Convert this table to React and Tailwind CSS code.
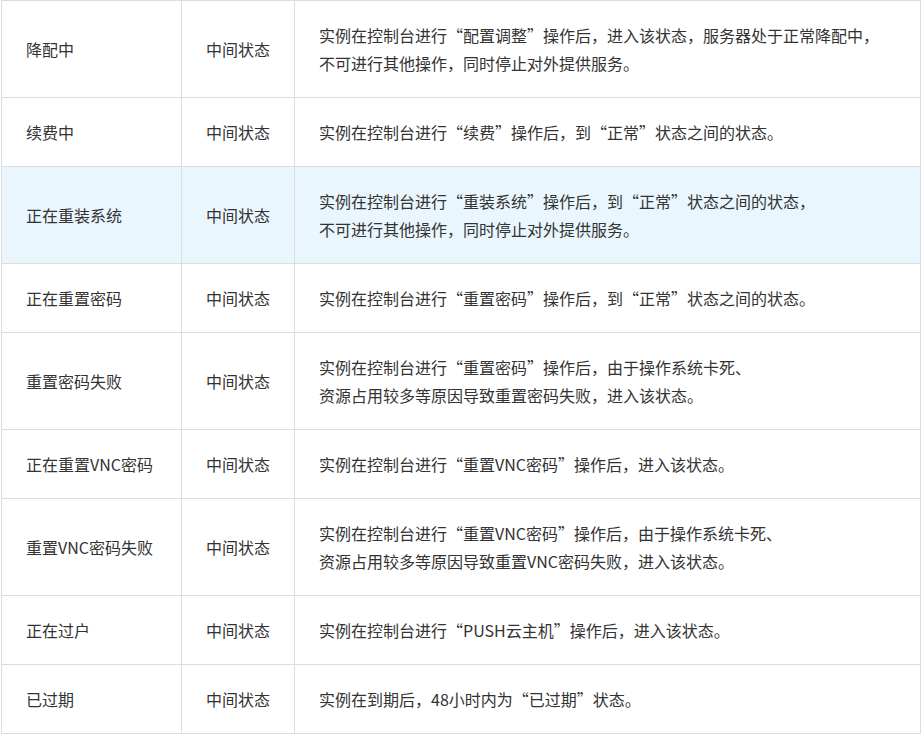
import React from "react";

const rows = [
  {
    name: "降配中",
    type: "中间状态",
    desc: ["实例在控制台进行“配置调整”操作后，进入该状态，服务器处于正常降配中，", "不可进行其他操作，同时停止对外提供服务。"],
  },
  { name: "续费中", type: "中间状态", desc: ["实例在控制台进行“续费”操作后，到“正常”状态之间的状态。"] },
  {
    name: "正在重装系统",
    type: "中间状态",
    desc: ["实例在控制台进行“重装系统”操作后，到“正常”状态之间的状态，", "不可进行其他操作，同时停止对外提供服务。"],
    active: true,
  },
  { name: "正在重置密码", type: "中间状态", desc: ["实例在控制台进行“重置密码”操作后，到“正常”状态之间的状态。"] },
  {
    name: "重置密码失败",
    type: "中间状态",
    desc: ["实例在控制台进行“重置密码”操作后，由于操作系统卡死、", "资源占用较多等原因导致重置密码失败，进入该状态。"],
  },
  { name: "正在重置VNC密码", type: "中间状态", desc: ["实例在控制台进行“重置VNC密码”操作后，进入该状态。"] },
  {
    name: "重置VNC密码失败",
    type: "中间状态",
    desc: ["实例在控制台进行“重置VNC密码”操作后，由于操作系统卡死、", "资源占用较多等原因导致重置VNC密码失败，进入该状态。"],
  },
  { name: "正在过户", type: "中间状态", desc: ["实例在控制台进行“PUSH云主机”操作后，进入该状态。"] },
  { name: "已过期", type: "中间状态", desc: ["实例在到期后，48小时内为“已过期”状态。"] },
];

function App() {
  return (
    <div className="bg-white pl-px font-['Microsoft_YaHei','Noto_Sans_CJK_SC',sans-serif] text-[16px] leading-[28px] text-[#333]">
      <table className="w-[920px] border-collapse table-fixed">
        <colgroup>
          <col className="w-[180px]" />
          <col className="w-[113px]" />
          <col />
        </colgroup>
        <tbody>
          {rows.map((r) => (
            <tr key={r.name} className={r.active ? "bg-[#eaf6fe]" : ""}>
              <td className="border border-[#ddd] px-6 py-5 whitespace-nowrap">{r.name}</td>
              <td className="border border-[#ddd] px-6 py-5 whitespace-nowrap">{r.type}</td>
              <td className="border border-[#ddd] px-6 py-5 whitespace-nowrap">
                {r.desc.map((d, i) => (
                  <div key={i}>{d}</div>
                ))}
              </td>
            </tr>
          ))}
        </tbody>
      </table>
    </div>
  );
}

export default App;
